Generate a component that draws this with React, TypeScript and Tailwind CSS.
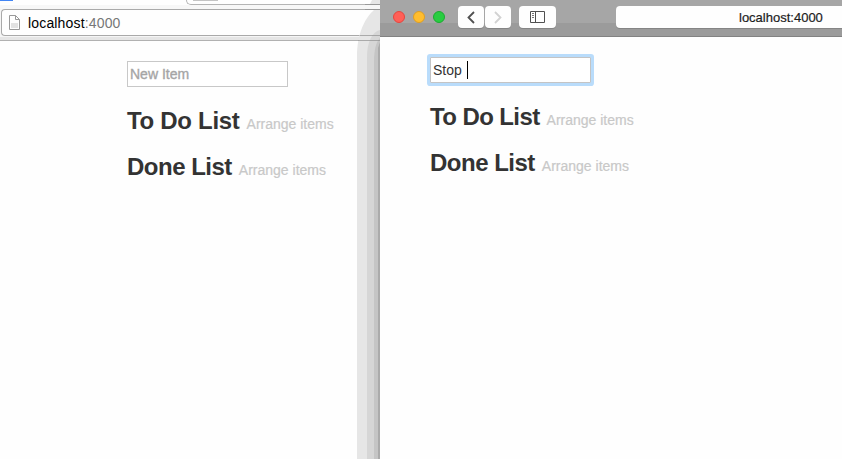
import React from 'react';

function ListHeading({ title, tracking }: { title: string; tracking: string }) {
  return (
    <div className="mb-[20px] flex h-[26px] items-baseline whitespace-nowrap leading-[26px] text-[#333]">
      <h2 className={`text-[24px] font-bold ${tracking}`}>{title}</h2>
      <span className="ml-[7px] text-[14px] text-[#c8c8c8] [-webkit-text-stroke:0.2px_#c8c8c8]">Arrange items</span>
    </div>
  );
}

function BackWindow() {
  return (
    <section className="relative flex w-[380px] shrink-0 flex-col overflow-hidden bg-[#fefefe]">
      <div className="flex h-[5px] shrink-0 items-start">
        <div className="h-px w-[13px] bg-[#4285f4]" />
        <div className="ml-[173px] flex h-[5px] flex-1 rounded-bl-[5px] border-b border-l border-[#b4b4b4] pl-[6px]">
          <div className="h-px w-[25px] bg-[#c4c4c4]" />
        </div>
      </div>
      <div className="h-[4px] shrink-0 bg-[#f7f7f7]" />
      <div className="flex h-[28px] shrink-0 bg-[#f5f5f5] pl-px">
        <div className="flex h-[27px] flex-1 items-center rounded-l-[4px] border border-r-0 border-[#a9a9a9] bg-[#fefefe] pl-[7px]">
          <svg width="11" height="15" viewBox="0 0 11 15" fill="#fff" stroke="#999">
            <path d="M.5.5h6l4 4v10H.5z" />
            <path d="M6.5.5v4h4" fill="none" />
            <path d="M2 8h7v5H2z" fill="#e3e3e3" stroke="none" />
          </svg>
          <span className="ml-[8px] text-[14px] leading-[20px] tracking-[0.16px] text-black">
            localhost<span className="text-[#777]">:4000</span>
          </span>
        </div>
      </div>
      <div className="h-[4px] shrink-0 border-b border-[#b1b1b1] bg-[#e5e5e5]" />
      <div className="pl-[127px] pt-[20px]">
        <div className="mb-[21px] flex h-[26px] w-[161px] items-center border border-[#c8c8c8] bg-white pl-[2px] text-[14px] text-[#a5a5a5] [-webkit-text-stroke:0.35px_#a5a5a5]">
          New Item
        </div>
        <ListHeading title="To Do List" tracking="tracking-[-0.3px]" />
        <ListHeading title="Done List" tracking="tracking-[-0.5px]" />
      </div>
      <svg className="absolute right-0 top-0" width="24" height="459" viewBox="0 0 24 459">
        <path d="M24 0H16L14 4H24ZM24 10H18C10 17 1 32 1 57V459H24Z" fill="#e6e6e6" />
        <path d="M24 30C16 32 11 42 11 57V459H24Z" fill="#d6d6d6" />
        <path d="M24 38C20 42 18 50 18 62V459H24Z" fill="#c5c5c5" />
        <path d="M22 48V459H24V42Z" fill="#ababab" />
        <path d="M9 4.5H24M9 9.5H24M4 35.5H24M2 40.5H24" stroke="#8b8b8b" strokeOpacity=".65" />
      </svg>
    </section>
  );
}

function FrontWindow() {
  return (
    <section className="flex min-w-0 flex-1 flex-col overflow-hidden bg-[#fefefe]">
      <header className="flex h-[37px] shrink-0 items-start border-b border-[#828282] bg-[linear-gradient(#a6a6a6_0_23px,#9b9b9b_23px)] pl-[13px] pt-[6px]">
        <div className="flex gap-[8px] pt-[5px]">
          <i className="size-[12px] rounded-full border border-[#e4453e] bg-[#ff5f57]" />
          <i className="size-[12px] rounded-full border border-[#dd9e24] bg-[#ffbd2e]" />
          <i className="size-[12px] rounded-full border border-[#1caa31] bg-[#28cd41]" />
        </div>
        <div className="ml-[13px] flex gap-px">
          <div className="flex h-[22px] w-[26px] items-center justify-center rounded-[4px] bg-[#fefefe] shadow-[0_1px_0_#858585]">
            <svg width="8" height="13" viewBox="0 0 8 13" fill="none" stroke="#505050" strokeWidth="1.8">
              <path d="M7 1 1.5 6.5 7 12" />
            </svg>
          </div>
          <div className="flex h-[22px] w-[26px] items-center justify-center rounded-[4px] bg-[#fefefe] shadow-[0_1px_0_#858585]">
            <svg width="8" height="13" viewBox="0 0 8 13" fill="none" stroke="#d2d2d2" strokeWidth="1.8">
              <path d="m1 1 5.5 5.5L1 12" />
            </svg>
          </div>
        </div>
        <div className="ml-[8px] flex h-[22px] w-[37px] items-center justify-center rounded-[4px] bg-[#fefefe] shadow-[0_1px_0_#858585]">
          <svg width="15" height="12" viewBox="0 0 15 12" fill="none" stroke="#505050">
            <path d="M.5.5h14v11H.5zM5.5.5v11" />
            <path d="M2 2.5h2M2 4.5h2M2 6.5h2" stroke="#777" />
          </svg>
        </div>
        <div className="ml-[60px] flex h-[22px] flex-1 items-center rounded-l-[4px] bg-[#fefefe] pl-[123px] pt-px text-[13px] text-[#1c1c1c] shadow-[0_1px_0_#858585] [-webkit-text-stroke:0.2px_#1c1c1c]">
          localhost:4000
        </div>
      </header>
      <div className="pl-[50px] pt-[20px]">
        <div className="mb-[21px] flex h-[26px] w-[161px] items-center rounded-[1px] border border-[#c4c4c4] bg-white pl-[2px] text-[14px] text-[#333] shadow-[0_0_0_3px_#b9dcfb]">
          Stop
          <span className="ml-[5px] h-[18px] w-px bg-black" />
        </div>
        <ListHeading title="To Do List" tracking="tracking-[-0.6px]" />
        <ListHeading title="Done List" tracking="tracking-[-0.5px]" />
      </div>
    </section>
  );
}

export default function App() {
  return (
    <main className="flex h-[459px] w-[842px] overflow-hidden bg-white font-['Liberation_Sans',Arial,sans-serif]">
      <BackWindow />
      <FrontWindow />
    </main>
  );
}
